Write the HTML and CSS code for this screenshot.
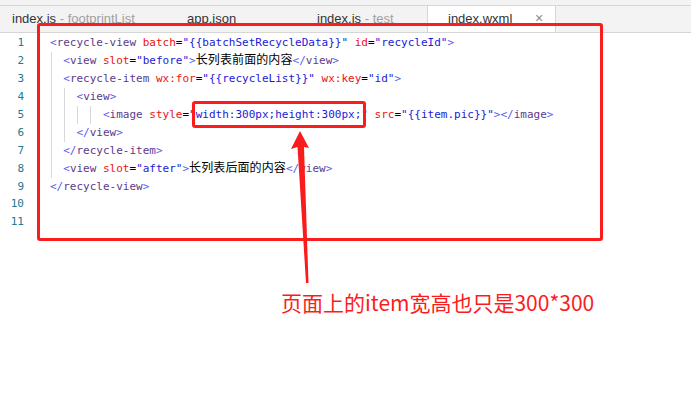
FILE: index.html
```html
<!DOCTYPE html>
<html>
<head>
<meta charset="utf-8">
<link rel="stylesheet" href="styles.css">
</head>
<body>
<div class="page">
  <div class="topstrip"></div>
  <div class="tabs">
    <div class="tab tab-first">index.js <span class="dim">- footprintList</span></div>
    <div class="tab">app.json</div>
    <div class="tab">index.js <span class="dim">- test</span></div>
    <div class="tab tab-active">index.wxml <span class="close">×</span></div>
  </div>
  <div class="editor">
    <div class="line"><span class="ln">1</span><span class="code"><span class="b">&lt;</span><span class="t">recycle-view</span> <span class="a">batch</span>=<span class="v">"{{batchSetRecycleData}}"</span> <span class="a">id</span>=<span class="v">"recycleId"</span><span class="b">&gt;</span></span></div>
    <div class="line"><span class="ln">2</span><span class="code"><span class="g g0"></span>  <span class="b">&lt;</span><span class="t">view</span> <span class="a">slot</span>=<span class="v">"before"</span><span class="b">&gt;</span><span class="cjk">长列表前面的内容</span><span class="b">&lt;/</span><span class="t">view</span><span class="b">&gt;</span></span></div>
    <div class="line"><span class="ln">3</span><span class="code"><span class="g g0"></span>  <span class="b">&lt;</span><span class="t">recycle-item</span> <span class="a">wx:for</span>=<span class="v">"{{recycleList}}"</span> <span class="a">wx:key</span>=<span class="v">"id"</span><span class="b">&gt;</span></span></div>
    <div class="line"><span class="ln">4</span><span class="code"><span class="g g0"></span><span class="g g1"></span>    <span class="b">&lt;</span><span class="t">view</span><span class="b">&gt;</span></span></div>
    <div class="line"><span class="ln">5</span><span class="code"><span class="g g0"></span><span class="g g1"></span><span class="g g2"></span><span class="g g3"></span>        <span class="b">&lt;</span><span class="t">image</span> <span class="a">style</span>=<span class="v">"width:300px;height:300px;"</span> <span class="a">src</span>=<span class="v">"{{item.pic}}"</span><span class="b">&gt;&lt;/</span><span class="t">image</span><span class="b">&gt;</span></span></div>
    <div class="line"><span class="ln">6</span><span class="code"><span class="g g0"></span><span class="g g1"></span>    <span class="b">&lt;/</span><span class="t">view</span><span class="b">&gt;</span></span></div>
    <div class="line"><span class="ln">7</span><span class="code"><span class="g g0"></span>  <span class="b">&lt;/</span><span class="t">recycle-item</span><span class="b">&gt;</span></span></div>
    <div class="line"><span class="ln">8</span><span class="code"><span class="g g0"></span>  <span class="b">&lt;</span><span class="t">view</span> <span class="a">slot</span>=<span class="v">"after"</span><span class="b">&gt;</span><span class="cjk">长列表后面的内容</span><span class="b">&lt;/</span><span class="t">view</span><span class="b">&gt;</span></span></div>
    <div class="line"><span class="ln">9</span><span class="code"><span class="b">&lt;/</span><span class="t">recycle-view</span><span class="b">&gt;</span></span></div>
    <div class="line"><span class="ln">10</span><span class="code"></span></div>
    <div class="line"><span class="ln">11</span><span class="code"></span></div>
  </div>

  <div class="mark mark-big"></div>
  <div class="mark mark-small"></div>
  <svg class="arrow" width="691" height="410" viewBox="0 0 691 410">
    <polygon points="300,131 309,148 304,147 308.5,283 306,283 297.5,147 291,149" fill="#fa1c1c"/>
  </svg>
  <div class="note">页面上的item宽高也只是300*300</div>
</div>
</body>
</html>
```

FILE: styles.css
```css
html, body {
  margin: 0;
  padding: 0;
  background: #ffffff;
}

.page {
  position: relative;
  width: 691px;
  height: 410px;
  overflow: hidden;
}

.topstrip {
  height: 5px;
  background: #f3f3f3;
}

.tabs {
  display: flex;
  height: 26px;
  background: #f3f3f3;
  border-top: 1px solid #d6d6d6;
  border-bottom: 1px solid #d6d6d6;
  font-family: "Liberation Sans", "Noto Sans", sans-serif;
  font-size: 13px;
  color: #333333;
}

.tab {
  box-sizing: border-box;
  width: 130px;
  padding-left: 20px;
  line-height: 25px;
  white-space: nowrap;
  overflow: hidden;
}

.tab-first {
  width: 167px;
  padding-left: 12px;
}

.dim {
  color: #a0a0a0;
}

.tab-active {
  width: 129px;
  height: 27px;
  margin-top: -1px;
  background: #ffffff;
  border-left: 1px solid #d6d6d6;
  border-right: 1px solid #d6d6d6;
  border-top: 1px solid #d6d6d6;
  line-height: 25px;
}

.close {
  margin-left: 19px;
  color: #8a8a8a;
  font-size: 14px;
}

.editor {
  padding-top: 1px;
  font-family: "DejaVu Sans Mono", "Liberation Mono", monospace;
  font-size: 11px;
}

.line {
  display: flex;
  height: 17.95px;
  line-height: 18px;
}

.ln {
  box-sizing: border-box;
  width: 50px;
  padding-right: 26px;
  text-align: right;
  color: #237893;
}

.code {
  position: relative;
  white-space: pre;
  color: #000000;
}

.b { color: #5a5af0; }
.t { color: #5b3c8c; }
.a { color: #ee1111; }
.v { color: #1a1ad8; }

.cjk {
  font-family: "Noto Sans CJK SC", sans-serif;
  font-size: 12px;
  line-height: 0;
  letter-spacing: 0.1px;
}

.g {
  position: absolute;
  top: 0;
  bottom: 0;
  width: 1px;
  background: #d8d8d8;
}
.g0 { left: 1px; }
.g1 { left: 14px; }
.g2 { left: 27px; }
.g3 { left: 40px; }

.mark {
  position: absolute;
  box-sizing: border-box;
  border: 3px solid #fb1d1d;
  border-radius: 3px;
}

.mark-big {
  left: 37px;
  top: 23px;
  width: 566px;
  height: 218px;
}

.mark-small {
  left: 192px;
  top: 101px;
  width: 174px;
  height: 27px;
}

.arrow {
  position: absolute;
  left: 0;
  top: 0;
}

.note {
  position: absolute;
  left: 281px;
  top: 288px;
  font-family: "Noto Sans CJK SC", "Noto Sans", sans-serif;
  font-size: 21px;
  line-height: 28px;
  color: #fb1d1d;
  white-space: nowrap;
}
```
